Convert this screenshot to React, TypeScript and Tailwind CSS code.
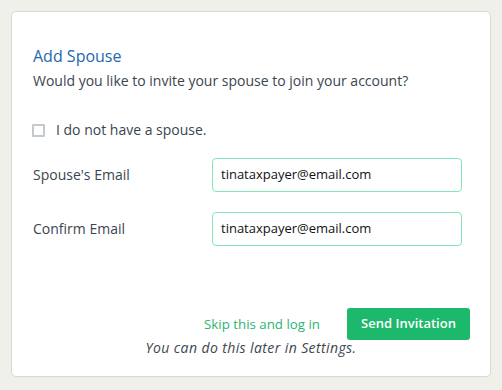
import React from "react";

export default function App() {
  return (
    <div
      className="min-h-screen w-full bg-[#f0f0eb] p-[11px]"
      style={{ fontFamily: '"Open Sans", "Noto Sans", sans-serif' }}
    >
      <div className="relative flex h-[366px] w-[480px] flex-col rounded-[5px] border border-[#d9d9d3] bg-white pl-[21px] pr-[20px] pt-[32px]">
        <h2 className="text-[16px] leading-[24px] text-[#2268ae]">Add Spouse</h2>
        <p className="mt-[3px] text-[14px] leading-[20px] text-[#3b4550]">
          Would you like to invite your spouse to join your account?
        </p>

        <label className="mt-[29px] flex items-center gap-[11px] text-[14px] leading-[20px] text-[#3b4550]">
          <span className="ml-[-1px] inline-block h-[13px] w-[13px] rounded-[1px] border-2 border-[#c4c9ce] bg-white" />
          <span>I do not have a spouse.</span>
        </label>

        <div className="mt-[18px] flex flex-col gap-[20px]">
          <div className="flex items-center">
            <span className="w-[179px] text-[14px] leading-[20px] text-[#3b4550]">Spouse's Email</span>
            <div className="flex h-[34px] w-[250px] items-center rounded-[4px] border border-[#80e6b6] pl-[8px] text-[13px] text-[#111]">
              tinataxpayer@email.com
            </div>
          </div>
          <div className="flex items-center">
            <span className="w-[179px] text-[14px] leading-[20px] text-[#3b4550]">Confirm Email</span>
            <div className="flex h-[34px] w-[250px] items-center rounded-[4px] border border-[#80e6b6] pl-[8px] text-[13px] text-[#111]">
              tinataxpayer@email.com
            </div>
          </div>
        </div>

        <div className="mt-[62px] flex items-center justify-end gap-[27px]">
          <span className="text-[13.3px] leading-[20px] text-[#2cb473]">Skip this and log in</span>
          <button className="h-[32px] w-[123px] rounded-[3px] bg-[#1cb86b] text-[13px] font-semibold text-white">
            Send Invitation
          </button>
        </div>
        <p className="ml-[-21px] mr-[-20px] text-center text-[14px] italic leading-[16px] tracking-[0.4px] text-[#3e4650]">
          You can do this later in Settings.
        </p>
      </div>
    </div>
  );
}
